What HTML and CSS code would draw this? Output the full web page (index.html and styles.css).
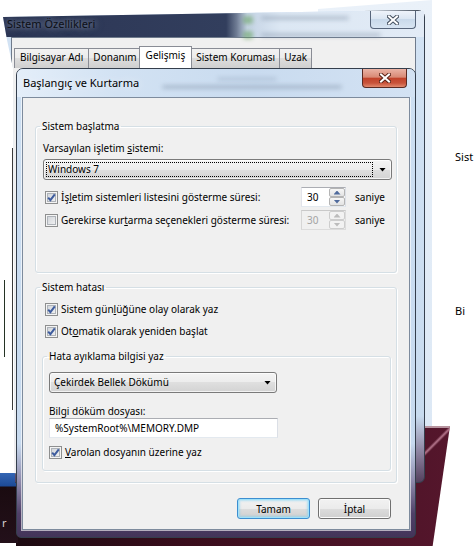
FILE: index.html
```html
<!DOCTYPE html>
<html lang="tr">
<head>
    <meta charset="UTF-8">
    <meta name="viewport" content="width=device-width, initial-scale=1.0">
    <title>Başlangıç ve Kurtarma</title>
    <link rel="stylesheet" href="styles.css">
</head>
<body>
    <div class="desktop">
        <!-- control panel window behind everything -->
        <div class="cp-glass"></div>
        <div class="cp-text cp-text-1">Sist</div>
        <div class="cp-text cp-text-2">Bi</div>
        <div class="wallpaper"><div class="streak"></div></div>
        <div class="taskbar-bit">r</div>
        <div class="edge edge-a"></div>
        <div class="edge edge-b"></div>

        <!-- Sistem Özellikleri -->
        <div class="window props">
            <div class="props-title">
                <span class="caption">Sistem Özellikleri</span>
                <span class="haze haze-icon haze-1"></span>
                <span class="haze haze-icon haze-2"></span>
                <span class="haze haze-line haze-3"></span>
                <span class="haze haze-line haze-4"></span>
                <button class="caption-close" type="button">
                    <svg width="12" height="10" viewBox="0 0 12 10">
                        <path d="M2 1.5L10 8.5M10 1.5L2 8.5" stroke="#45505f" stroke-width="4" stroke-linecap="square"/>
                        <path d="M2 1.5L10 8.5M10 1.5L2 8.5" stroke="#fff" stroke-width="2" stroke-linecap="square"/>
                    </svg>
                </button>
            </div>
            <div class="props-client">
                <div class="tabs">
                    <div class="tab">Bilgisayar Adı</div>
                    <div class="tab">Donanım</div>
                    <div class="tab active">Gelişmiş</div>
                    <div class="tab">Sistem Koruması</div>
                    <div class="tab">Uzak</div>
                </div>
            </div>
        </div>

        <!-- Başlangıç ve Kurtarma -->
        <div class="window dialog">
            <div class="dialog-title">
                <span class="caption">Başlangıç ve Kurtarma</span>
                <span class="haze haze-line haze-5"></span>
                <span class="haze haze-line haze-6"></span>
                <button class="caption-close red" type="button">
                    <svg width="12" height="10" viewBox="0 0 12 10">
                        <path d="M2 1.5L10 8.5M10 1.5L2 8.5" stroke="#5b2418" stroke-width="4" stroke-linecap="square"/>
                        <path d="M2 1.5L10 8.5M10 1.5L2 8.5" stroke="#fff" stroke-width="2" stroke-linecap="square"/>
                    </svg>
                </button>
            </div>
            <div class="dialog-client">
                <fieldset class="group group-boot">
                    <legend>Sistem başlatma</legend>
                    <div class="field-label">Varsayılan işletim <u>s</u>istemi:</div>
                    <div class="combo combo-wide">
                        <span class="combo-value focused">Windows 7</span>
                        <span class="combo-arrow"></span>
                    </div>
                    <div class="timer-row first">
                        <div class="check">
                            <span class="box">
                                <svg width="9" height="9" viewBox="0 0 9 9"><path d="M1.2 4.6L3.4 7.2L7.8 1.4" fill="none" stroke="#3e5c9e" stroke-width="2"/></svg>
                            </span>
                            <span>İş<u>l</u>etim sistemleri listesini gösterme süresi:</span>
                        </div>
                        <div class="spin">
                            <span class="spin-value">30</span>
                            <span class="spin-btns"><span class="spin-up"></span><span class="spin-down"></span></span>
                        </div>
                        <span class="unit">saniye</span>
                    </div>
                    <div class="timer-row">
                        <div class="check">
                            <span class="box"></span>
                            <span>Gerekirse kur<u>t</u>arma seçenekleri gösterme süresi:</span>
                        </div>
                        <div class="spin disabled">
                            <span class="spin-value">30</span>
                            <span class="spin-btns"><span class="spin-up"></span><span class="spin-down"></span></span>
                        </div>
                        <span class="unit">saniye</span>
                    </div>
                </fieldset>

                <fieldset class="group group-error">
                    <legend>Sistem hatası</legend>
                    <div class="check check-row">
                        <span class="box">
                            <svg width="9" height="9" viewBox="0 0 9 9"><path d="M1.2 4.6L3.4 7.2L7.8 1.4" fill="none" stroke="#3e5c9e" stroke-width="2"/></svg>
                        </span>
                        <span>Sistem gün<u>l</u>üğüne olay olarak yaz</span>
                    </div>
                    <div class="check check-row">
                        <span class="box">
                            <svg width="9" height="9" viewBox="0 0 9 9"><path d="M1.2 4.6L3.4 7.2L7.8 1.4" fill="none" stroke="#3e5c9e" stroke-width="2"/></svg>
                        </span>
                        <span>Ot<u>o</u>matik olarak yeniden başlat</span>
                    </div>

                    <fieldset class="group group-debug">
                        <legend>Hata ayıklama bilgisi yaz</legend>
                        <div class="combo combo-short">
                            <span class="combo-value">Çekirdek Bellek Dökümü</span>
                            <span class="combo-arrow"></span>
                        </div>
                        <div class="field-label dump-label">Bilgi döküm dosyası:</div>
                        <div class="text-input">%SystemRoot%\MEMORY.DMP</div>
                        <div class="check check-row overwrite">
                            <span class="box">
                                <svg width="9" height="9" viewBox="0 0 9 9"><path d="M1.2 4.6L3.4 7.2L7.8 1.4" fill="none" stroke="#3e5c9e" stroke-width="2"/></svg>
                            </span>
                            <span><u>V</u>arolan dosyanın üzerine yaz</span>
                        </div>
                    </fieldset>
                </fieldset>

                <div class="buttons">
                    <button class="btn default" type="button">Tamam</button>
                    <button class="btn" type="button">İptal</button>
                </div>
            </div>
        </div>
    </div>
</body>
</html>
```

FILE: styles.css
```css
* {
    box-sizing: border-box;
    margin: 0;
    padding: 0;
}
body {
    width: 475px;
    height: 548px;
    overflow: hidden;
    background: #fff;
    font-family: "Noto Sans", "Open Sans", sans-serif;
    font-size: 10px;
    line-height: 14px;
    color: #000;
}
button {
    font: inherit;
    color: inherit;
}
u {
    text-underline-offset: 1px;
}
.desktop {
    position: relative;
    width: 475px;
    height: 548px;
}

/* things behind the dialogs */
.cp-glass {
    position: absolute;
    left: 318px;
    top: 0;
    width: 114px;
    height: 428px;
    background: linear-gradient(#eaf1f9, #dce8f5);
    clip-path: polygon(0 9px, 100% 0, 100% 100%, 0 100%);
}
.cp-text {
    position: absolute;
    left: 455px;
    font-size: 11px;
}
.cp-text-1 { top: 150px; }
.cp-text-2 { top: 304px; }
.wallpaper {
    position: absolute;
    left: 16px;
    top: 426px;
    width: 434px;
    height: 120px;
    background:
        linear-gradient(#b7949f, #b7949f 2px, transparent 2px),
        linear-gradient(to right, #1c0a11, #3a0d1c 40%, #55162c);
    clip-path: polygon(0 0, 100% 0, 96% 100%, 0 100%);
}
.streak {
    position: absolute;
    left: 405px;
    top: 2px;
    width: 30px;
    height: 30px;
    background: linear-gradient(135deg, transparent 44%, rgba(222, 160, 182, 0.7) 49%, transparent 54%);
}
.taskbar-bit {
    position: absolute;
    left: 0;
    top: 473px;
    width: 18px;
    height: 70px;
    padding: 43px 0 0 2px;
    background: linear-gradient(#3466b4, #1d4a96 13px, #1a0b10 14px, #23101a);
    color: #d9cfd3;
    font-size: 11px;
}
.edge {
    position: absolute;
    width: 1px;
}
.edge-a {
    left: 12px;
    top: 148px;
    height: 262px;
    background: #3b3b3b;
}
.edge-b {
    left: 4px;
    top: 280px;
    height: 77px;
    background: #243324;
}

/* window chrome */
.window {
    position: absolute;
    display: flex;
    flex-direction: column;
    border: 1px solid #36404e;
}
.caption {
    font-size: 11px;
    white-space: nowrap;
    position: relative;
    z-index: 1;
}
.caption-close {
    margin-left: auto;
    margin-right: 8px;
    width: 46px;
    height: 18px;
    border: 1px solid #57657a;
    border-top: 0;
    border-radius: 0 0 4px 4px;
    background: linear-gradient(#eef3fa, #dbe6f2 45%, #c9d9ea 50%, #d8e5f2);
    display: flex;
    align-items: center;
    justify-content: center;
    position: relative;
    z-index: 1;
}
.caption-close.red {
    width: 45px;
    height: 19px;
    border-color: #5a2a22;
    background: linear-gradient(#eab3a5, #d98a76 45%, #c1432b 52%, #c8533a 78%, #e28a6e);
}
.haze {
    position: absolute;
    filter: blur(2px);
}
.haze-icon {
    width: 10px;
    height: 8px;
    border-radius: 3px;
    background: rgba(98, 160, 86, 0.55);
}
.haze-line {
    height: 4px;
    border-radius: 2px;
    background: rgba(110, 125, 150, 0.35);
}
.haze-1 { left: 240px; top: 5px; }
.haze-2 { left: 240px; top: 20px; }
.haze-3 { left: 258px; top: 5px; width: 88px; }
.haze-4 { left: 258px; top: 22px; width: 120px; }
.haze-5 { left: 145px; top: 16px; width: 180px; }
.haze-6 { left: 200px; top: 8px; width: 60px; opacity: 0.6; }

/* Sistem Özellikleri */
.props {
    left: 2px;
    top: 10px;
    width: 423px;
    height: 473px;
    border-radius: 7px 7px 6px 6px;
    padding: 0 8px 8px;
    background: linear-gradient(#d3e3f4, #c8dbef 86%, #8a7f9c 94%, #54405e);
    clip-path: polygon(1px 7px, 100% 0, 100% 100%, 13px 100%, 11px 58px, 5px 30px);
}
.props-title {
    position: relative;
    display: flex;
    align-items: flex-start;
    height: 26px;
    margin: 0 -8px;
    padding-left: 4px;
    background: linear-gradient(to right, #2c3655, #323e5d 53%, #6f7c94 55.5%, #c4d3e4 58%, #dce7f3 66%, #e2ebf6);
}
.props-title .caption {
    line-height: 26px;
    color: #0c0f16;
    text-shadow: 0 0 5px rgba(160, 174, 196, 0.8), 0 0 9px rgba(160, 174, 196, 0.5);
}
.props-client {
    flex: 1;
    background: #f0f0f0;
    border: 1px solid #6f7b8c;
    padding: 8px 0 0 2px;
}
.tabs {
    display: flex;
    align-items: flex-end;
    height: 22px;
}
.tab {
    height: 20px;
    padding: 0 4px;
    margin-right: -1px;
    border: 1px solid #898c95;
    border-bottom: 0;
    background: linear-gradient(#f2f2f2, #ebebeb 50%, #dddddd 50%, #cfcfcf);
    line-height: 17px;
    white-space: nowrap;
}
.tab:first-child {
    padding: 0 5px;
}
.tab.active {
    position: relative;
    z-index: 1;
    height: 22px;
    margin: 0 -1px 0 -2px;
    padding: 0 6px;
    background: #fff;
}

/* Başlangıç ve Kurtarma */
.dialog {
    left: 16px;
    top: 68px;
    width: 400px;
    height: 470px;
    border-color: #343e4c;
    border-radius: 7px 7px 5px 5px;
    padding: 0 5px 7px;
    background: linear-gradient(#cddff2, #c7daef 80%, #8e8aac 88%, #4f4068 95%, #433459);
}
.dialog-title {
    position: relative;
    display: flex;
    align-items: flex-start;
    height: 28px;
    margin: 0 -5px;
    padding-left: 6px;
    border-radius: 6px 6px 0 0;
    background: linear-gradient(to right, #e4eef9, #d2e2f3 25%, #c9dbef 60%, #d3e2f3);
}
.dialog-title .caption {
    line-height: 28px;
    text-shadow: 0 0 8px rgba(255, 255, 255, 0.8);
}
.dialog-client {
    flex: 1;
    display: flex;
    flex-direction: column;
    background: #f0f0f0;
    border: 1px solid #7d8b9d;
    box-shadow: 0 0 0 1px rgba(255, 255, 255, 0.6);
    padding: 21px 12px 0;
}

/* group boxes */
.group {
    min-width: 0;
    border: 1px solid #d5dfe5;
    border-radius: 3px;
    box-shadow: inset 1px 1px 0 #fff, 1px 1px 0 #fff;
}
.group legend {
    padding: 0 2px;
    line-height: 14px;
}
.group-boot {
    padding: 0 4px 42px 7px;
}
.group-boot > legend { margin-left: -3px; }
.group-error {
    margin-top: 7px;
    padding: 0 5px 11px 6px;
}
.group-error > legend { margin-left: -2px; }
.group-debug {
    margin-top: 11px;
    padding: 0 6px 11px 6px;
}
.group-debug > legend { margin-left: -2px; }

.field-label {
    margin-top: 8px;
}
.dump-label {
    margin-top: 11px;
}

/* combo boxes */
.combo {
    display: flex;
    align-items: center;
    height: 21px;
    padding: 0 5px 0 2px;
    border: 1px solid #7a7a7a;
    border-radius: 3px;
    background: linear-gradient(#f4f4f4, #ececec 50%, #dfdfdf 50%, #d3d3d3);
    box-shadow: inset 0 0 0 1px rgba(255, 255, 255, 0.7);
}
.combo-wide {
    margin-top: 4px;
}
.combo-short {
    width: 228px;
    margin-top: 9px;
    padding-left: 3px;
}
.combo-value {
    flex: 1;
    height: 15px;
    padding-left: 1px;
    line-height: 14px;
    white-space: nowrap;
}
.combo-value.focused {
    flex: none;
    width: 327px;
    border: 1px dotted #000;
    line-height: 13px;
}
.combo-arrow {
    margin-left: auto;
    width: 7px;
    height: 4px;
    background: #000;
    clip-path: polygon(0 0, 100% 0, 50% 100%);
}

/* check boxes */
.check {
    display: flex;
    align-items: center;
    gap: 3px;
    white-space: nowrap;
}
.box {
    flex: none;
    display: flex;
    align-items: center;
    justify-content: center;
    width: 13px;
    height: 13px;
    border: 1px solid #8e8f8f;
    background: linear-gradient(135deg, #cbcfd5, #f7f7f7);
    box-shadow: inset 0 0 0 1px #f4f4f4, inset 0 0 0 2px #aeb3b9;
}
.check-row {
    height: 14px;
    margin: 8px 0 0 3px;
}
.overwrite {
    margin: 7px 0 0;
}

/* timeout rows */
.timer-row {
    display: flex;
    align-items: center;
    height: 20px;
    margin-top: 3px;
}
.timer-row.first {
    margin-top: 7px;
}
.timer-row .check {
    width: 256px;
    margin-left: 2px;
}
.unit {
    margin-left: 9px;
}
.spin {
    display: flex;
    width: 45px;
    height: 20px;
    border: 1px solid;
    border-color: #abadb3 #dbdfe6 #e3e9ef #e2e3ea;
    background: #fff;
}
.spin-value {
    flex: 1;
    padding-left: 5px;
    line-height: 18px;
}
.spin-btns {
    display: flex;
    flex-direction: column;
    width: 16px;
}
.spin-btns span {
    flex: 1;
    display: flex;
    align-items: center;
    justify-content: center;
    border: 1px solid #b4b4b4;
    border-radius: 2px;
    background: linear-gradient(#f6f6f6, #e3e3e3);
}
.spin-btns span::after {
    content: "";
    width: 7px;
    height: 4px;
    background: #4f6a9c;
    clip-path: polygon(50% 0, 100% 100%, 0 100%);
}
.spin-btns .spin-down::after {
    clip-path: polygon(0 0, 100% 0, 50% 100%);
}
.spin.disabled {
    background: #f0f0f0;
    border-color: #c9c9c9 #dcdcdc #dcdcdc #d6d6d6;
    color: #a3a3a3;
}
.spin.disabled .spin-btns span {
    border-color: #cdcdcd;
    background: #f2f2f2;
}
.spin.disabled .spin-btns span::after {
    background: #bcbcbc;
}

/* text box */
.text-input {
    width: 229px;
    height: 20px;
    padding-left: 5px;
    border: 1px solid;
    border-color: #abadb3 #dbdfe6 #e3e9ef #e2e3ea;
    background: #fff;
    line-height: 18px;
    white-space: nowrap;
}

/* dialog buttons */
.buttons {
    display: flex;
    justify-content: flex-end;
    gap: 8px;
    margin-top: 15px;
    padding-right: 6px;
}
.btn {
    width: 73px;
    height: 21px;
    border: 1px solid #707070;
    border-radius: 3px;
    background: linear-gradient(#f2f2f2, #ebebeb 50%, #dddddd 50%, #cfcfcf);
    box-shadow: inset 0 0 0 1px #fbfbfb;
}
.btn.default {
    border-color: #3c8ed0;
    box-shadow: inset 0 0 0 1px #9fe1fa, inset 0 0 2px 2px rgba(120, 210, 245, 0.5);
}
```
